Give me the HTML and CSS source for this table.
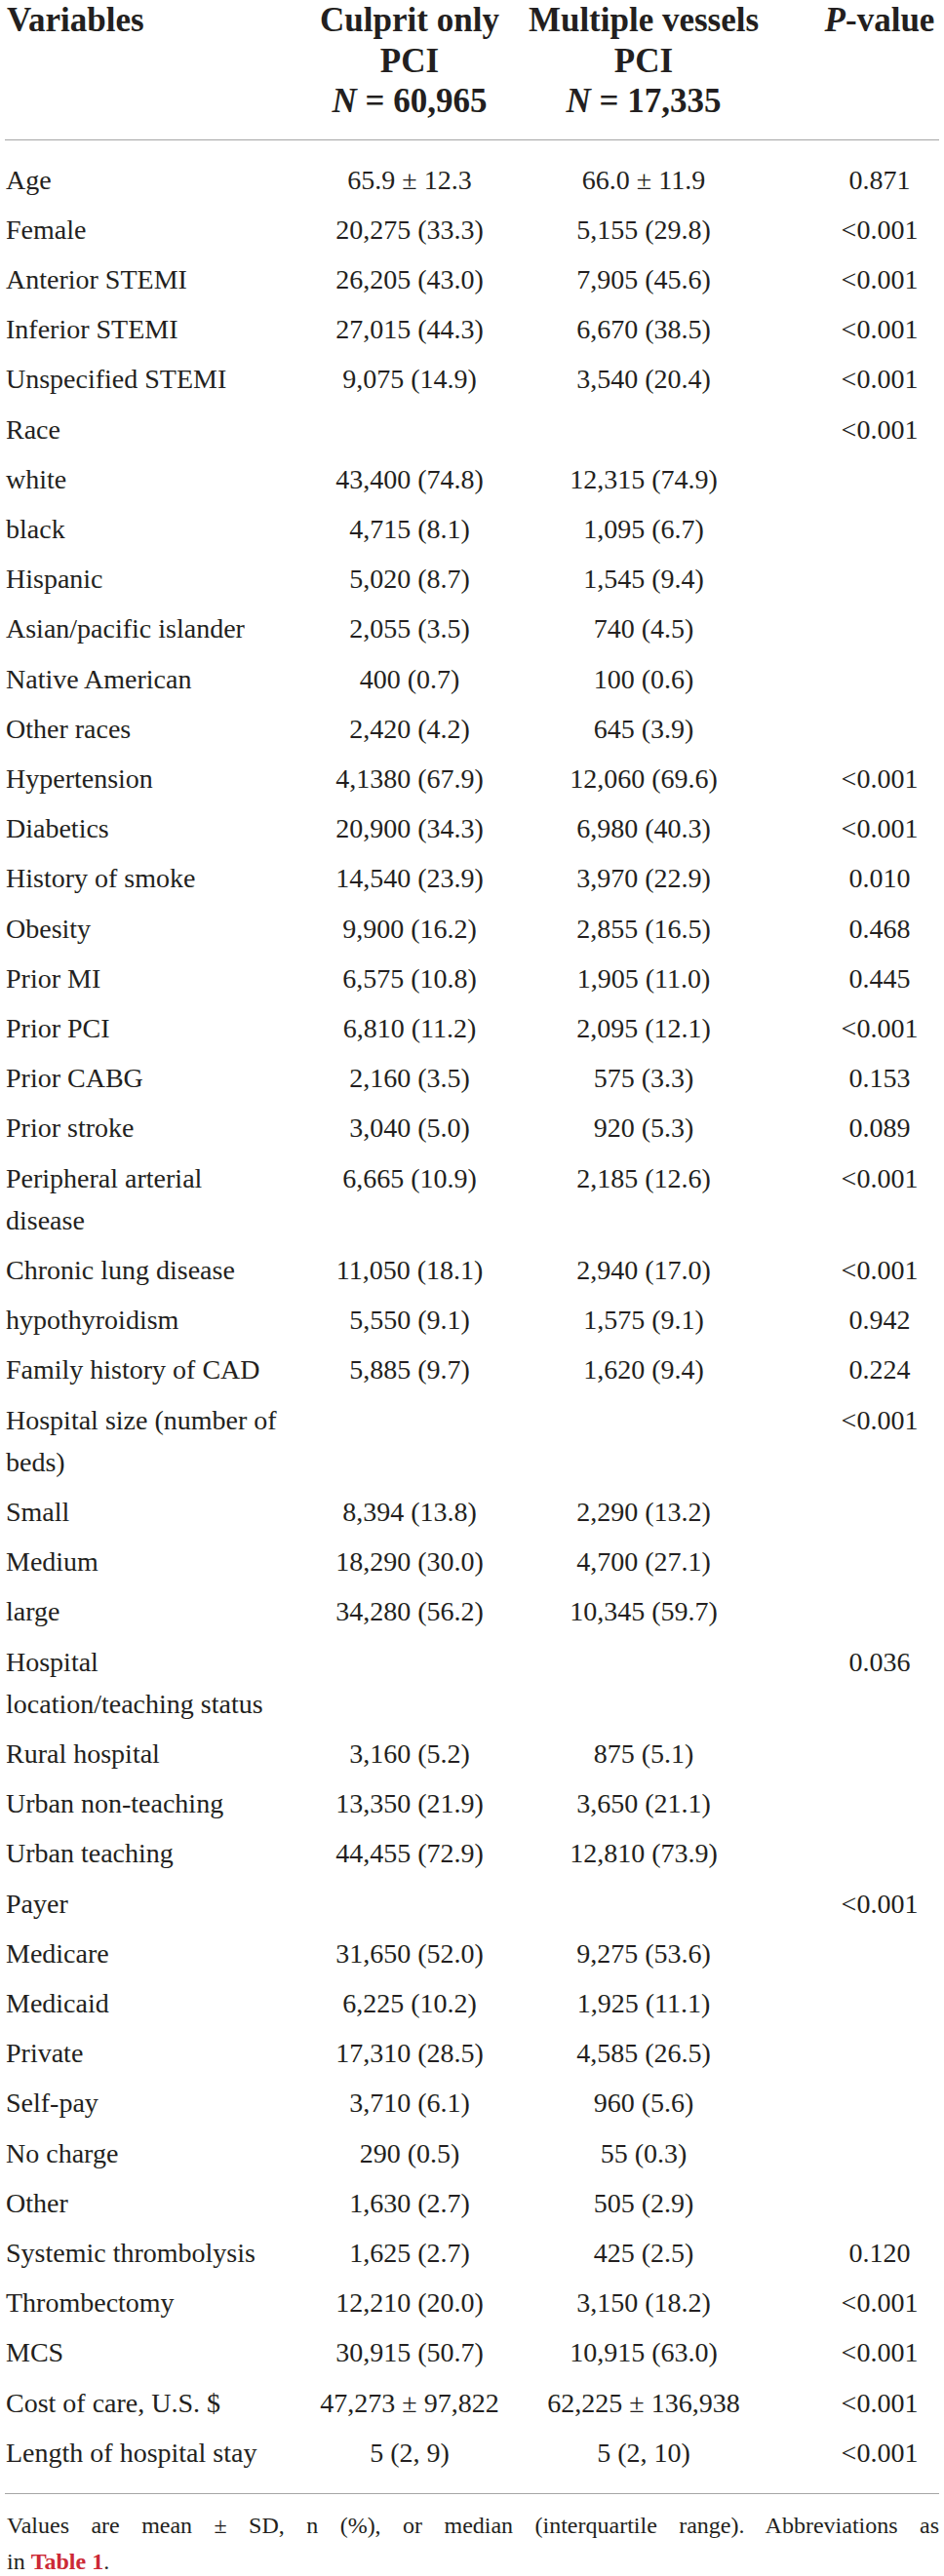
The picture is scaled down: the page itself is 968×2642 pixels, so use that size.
FILE: index.html
```html
<!DOCTYPE html>
<html lang="en">
<head>
    <meta charset="UTF-8">
    <meta name="viewport" content="width=device-width, initial-scale=1.0">
    <title>Table 2 - Baseline characteristics</title>
    <link rel="stylesheet" href="styles.css">
</head>
<body>

    <div class="table-wrap">
        <table class="data-table">
            <colgroup>
                <col class="col-var">
                <col class="col-culprit">
                <col class="col-multi">
                <col class="col-p">
            </colgroup>
            <thead>
                <tr>
                    <th class="var">Variables</th>
                    <th>Culprit only<br>PCI<br><i>N</i> = 60,965</th>
                    <th>Multiple vessels<br>PCI<br><i>N</i> = 17,335</th>
                    <th class="p"><i>P</i>-value</th>
                </tr>
            </thead>
            <tbody>
                <tr><td>Age</td><td>65.9 ± 12.3</td><td>66.0 ± 11.9</td><td class="p">0.871</td></tr>
                <tr><td>Female</td><td>20,275 (33.3)</td><td>5,155 (29.8)</td><td class="p">&lt;0.001</td></tr>
                <tr><td>Anterior STEMI</td><td>26,205 (43.0)</td><td>7,905 (45.6)</td><td class="p">&lt;0.001</td></tr>
                <tr><td>Inferior STEMI</td><td>27,015 (44.3)</td><td>6,670 (38.5)</td><td class="p">&lt;0.001</td></tr>
                <tr><td>Unspecified STEMI</td><td>9,075 (14.9)</td><td>3,540 (20.4)</td><td class="p">&lt;0.001</td></tr>
                <tr><td>Race</td><td></td><td></td><td class="p">&lt;0.001</td></tr>
                <tr><td>white</td><td>43,400 (74.8)</td><td>12,315 (74.9)</td><td class="p"></td></tr>
                <tr><td>black</td><td>4,715 (8.1)</td><td>1,095 (6.7)</td><td class="p"></td></tr>
                <tr><td>Hispanic</td><td>5,020 (8.7)</td><td>1,545 (9.4)</td><td class="p"></td></tr>
                <tr><td>Asian/pacific islander</td><td>2,055 (3.5)</td><td>740 (4.5)</td><td class="p"></td></tr>
                <tr><td>Native American</td><td>400 (0.7)</td><td>100 (0.6)</td><td class="p"></td></tr>
                <tr><td>Other races</td><td>2,420 (4.2)</td><td>645 (3.9)</td><td class="p"></td></tr>
                <tr><td>Hypertension</td><td>4,1380 (67.9)</td><td>12,060 (69.6)</td><td class="p">&lt;0.001</td></tr>
                <tr><td>Diabetics</td><td>20,900 (34.3)</td><td>6,980 (40.3)</td><td class="p">&lt;0.001</td></tr>
                <tr><td>History of smoke</td><td>14,540 (23.9)</td><td>3,970 (22.9)</td><td class="p">0.010</td></tr>
                <tr><td>Obesity</td><td>9,900 (16.2)</td><td>2,855 (16.5)</td><td class="p">0.468</td></tr>
                <tr><td>Prior MI</td><td>6,575 (10.8)</td><td>1,905 (11.0)</td><td class="p">0.445</td></tr>
                <tr><td>Prior PCI</td><td>6,810 (11.2)</td><td>2,095 (12.1)</td><td class="p">&lt;0.001</td></tr>
                <tr><td>Prior CABG</td><td>2,160 (3.5)</td><td>575 (3.3)</td><td class="p">0.153</td></tr>
                <tr><td>Prior stroke</td><td>3,040 (5.0)</td><td>920 (5.3)</td><td class="p">0.089</td></tr>
                <tr><td>Peripheral arterial<br>disease</td><td>6,665 (10.9)</td><td>2,185 (12.6)</td><td class="p">&lt;0.001</td></tr>
                <tr><td>Chronic lung disease</td><td>11,050 (18.1)</td><td>2,940 (17.0)</td><td class="p">&lt;0.001</td></tr>
                <tr><td>hypothyroidism</td><td>5,550 (9.1)</td><td>1,575 (9.1)</td><td class="p">0.942</td></tr>
                <tr><td>Family history of CAD</td><td>5,885 (9.7)</td><td>1,620 (9.4)</td><td class="p">0.224</td></tr>
                <tr><td>Hospital size (number of<br>beds)</td><td></td><td></td><td class="p">&lt;0.001</td></tr>
                <tr><td>Small</td><td>8,394 (13.8)</td><td>2,290 (13.2)</td><td class="p"></td></tr>
                <tr><td>Medium</td><td>18,290 (30.0)</td><td>4,700 (27.1)</td><td class="p"></td></tr>
                <tr><td>large</td><td>34,280 (56.2)</td><td>10,345 (59.7)</td><td class="p"></td></tr>
                <tr><td>Hospital<br>location/teaching status</td><td></td><td></td><td class="p">0.036</td></tr>
                <tr><td>Rural hospital</td><td>3,160 (5.2)</td><td>875 (5.1)</td><td class="p"></td></tr>
                <tr><td>Urban non-teaching</td><td>13,350 (21.9)</td><td>3,650 (21.1)</td><td class="p"></td></tr>
                <tr><td>Urban teaching</td><td>44,455 (72.9)</td><td>12,810 (73.9)</td><td class="p"></td></tr>
                <tr><td>Payer</td><td></td><td></td><td class="p">&lt;0.001</td></tr>
                <tr><td>Medicare</td><td>31,650 (52.0)</td><td>9,275 (53.6)</td><td class="p"></td></tr>
                <tr><td>Medicaid</td><td>6,225 (10.2)</td><td>1,925 (11.1)</td><td class="p"></td></tr>
                <tr><td>Private</td><td>17,310 (28.5)</td><td>4,585 (26.5)</td><td class="p"></td></tr>
                <tr><td>Self-pay</td><td>3,710 (6.1)</td><td>960 (5.6)</td><td class="p"></td></tr>
                <tr><td>No charge</td><td>290 (0.5)</td><td>55 (0.3)</td><td class="p"></td></tr>
                <tr><td>Other</td><td>1,630 (2.7)</td><td>505 (2.9)</td><td class="p"></td></tr>
                <tr><td>Systemic thrombolysis</td><td>1,625 (2.7)</td><td>425 (2.5)</td><td class="p">0.120</td></tr>
                <tr><td>Thrombectomy</td><td>12,210 (20.0)</td><td>3,150 (18.2)</td><td class="p">&lt;0.001</td></tr>
                <tr><td>MCS</td><td>30,915 (50.7)</td><td>10,915 (63.0)</td><td class="p">&lt;0.001</td></tr>
                <tr><td>Cost of care, U.S. $</td><td>47,273 ± 97,822</td><td>62,225 ± 136,938</td><td class="p">&lt;0.001</td></tr>
                <tr><td>Length of hospital stay</td><td>5 (2, 9)</td><td>5 (2, 10)</td><td class="p">&lt;0.001</td></tr>
            </tbody>
        </table>

        <div class="table-note">
            <span class="note-line">Values are mean ± SD, n (%), or median (interquartile range). Abbreviations as</span>
            in <a class="table-ref" href="#">Table 1</a>.
        </div>
    </div>

</body>
</html>
```

FILE: styles.css
```css
body {
    margin: 0;
    background-color: #fff;
    color: #231f20;
    font-family: "Liberation Serif", "Times New Roman", serif;
}
.table-wrap {
    width: 958px;
    padding-left: 5px;
}
.data-table {
    width: 958px;
    border-collapse: collapse;
    table-layout: fixed;
}
.col-var {
    width: 300px;
}
.col-culprit {
    width: 230px;
}
.col-multi {
    width: 250px;
}
.data-table th {
    font-size: 35px;
    line-height: 41.5px;
    font-weight: bold;
    text-align: center;
    vertical-align: top;
    padding: 0 0 18px 0;
    border-bottom: 1.5px solid #a6a6a6;
    white-space: nowrap;
}
.data-table th.var {
    text-align: left;
    padding-left: 2px;
}
.data-table td {
    font-size: 28px;
    line-height: 43.2px;
    text-align: center;
    vertical-align: top;
    padding: 4px 0;
    white-space: nowrap;
}
.data-table td:first-child {
    text-align: left;
    padding-left: 1px;
}
.data-table th.p, .data-table td.p {
    padding-left: 56px;
}
.data-table tbody tr:first-child td {
    padding-top: 19px;
}
.data-table tbody tr:last-child td {
    padding-bottom: 19.5px;
    border-bottom: 1.5px solid #a6a6a6;
}
.table-note {
    font-size: 24px;
    line-height: 37px;
    margin-top: 14px;
    padding-left: 2px;
}
.note-line {
    display: block;
    text-align: justify;
    text-align-last: justify;
}
.table-ref {
    color: #cc2936;
    font-weight: bold;
    text-decoration: none;
}
```
